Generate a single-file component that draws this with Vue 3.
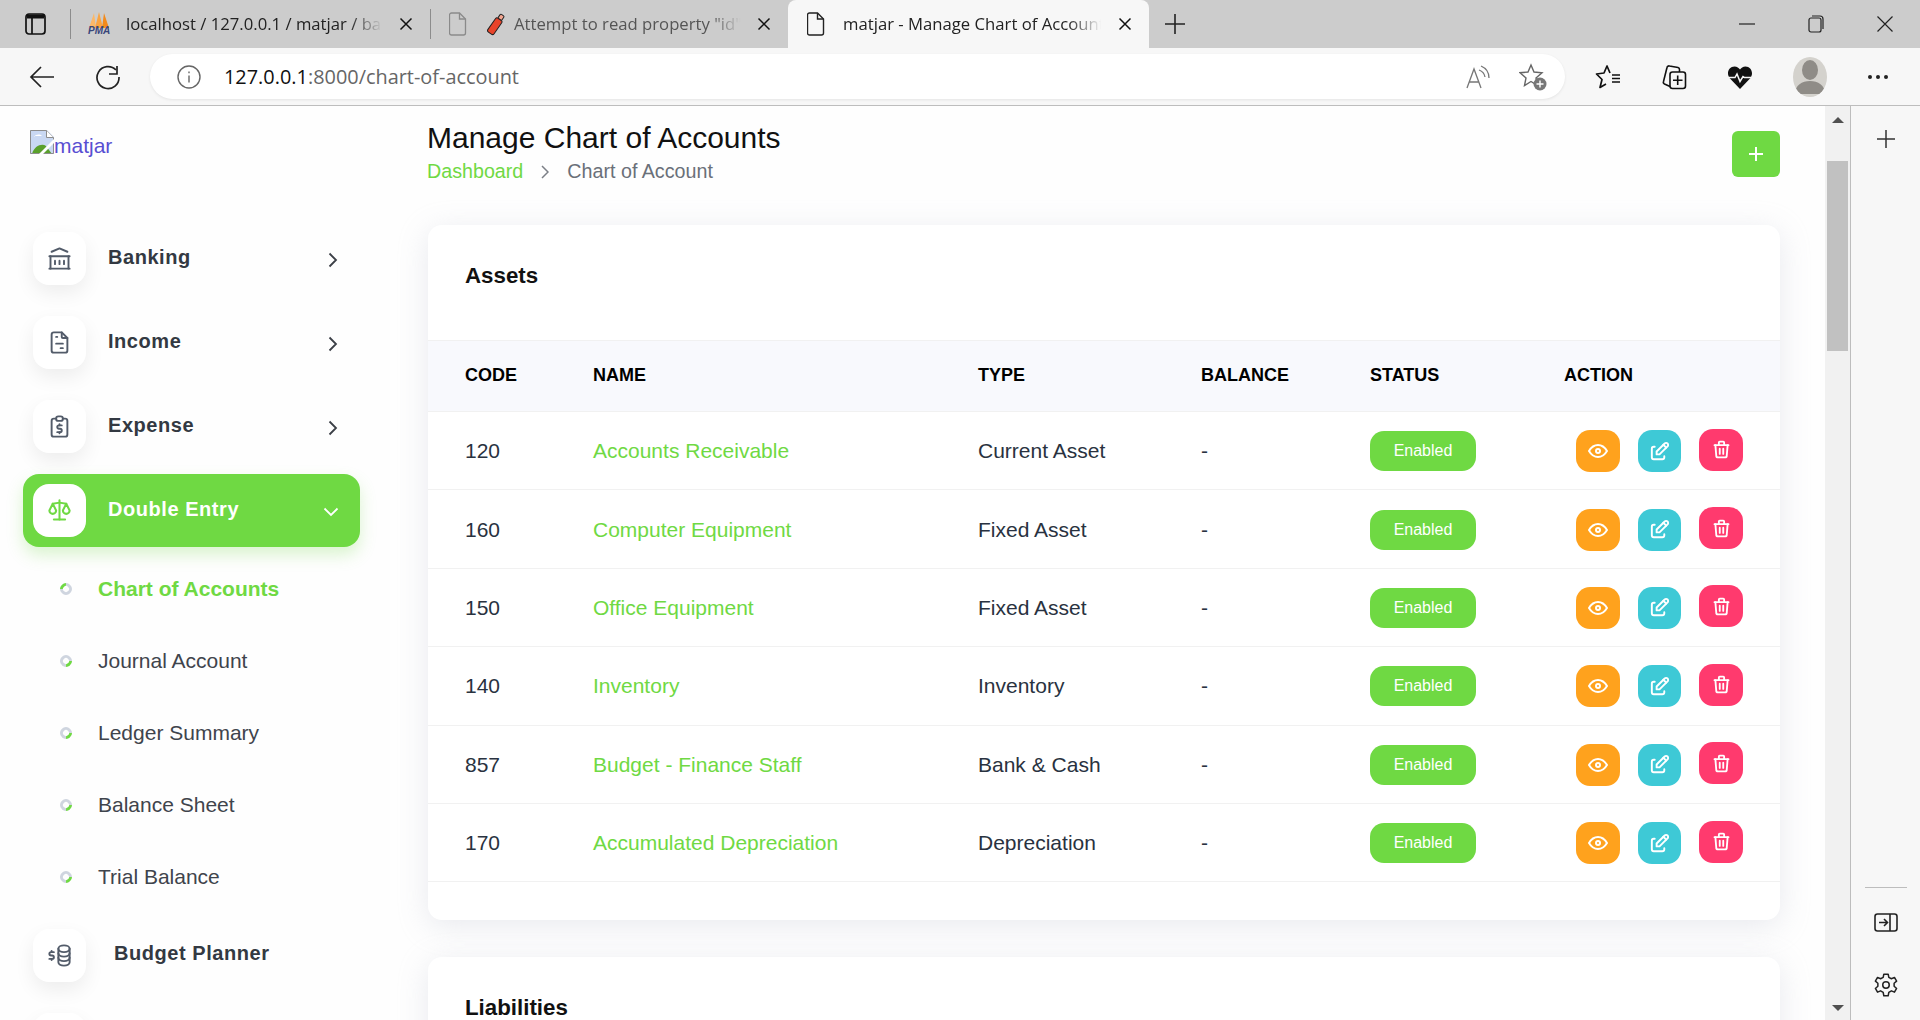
<template>
  <div class="window">
    <div class="tabstrip">
      <button class="tab-toggle">
        <svg width="21" height="22" viewBox="0 0 21 22" fill="none" stroke="#111" stroke-width="1.7"><rect x="1" y="1" width="19" height="20" rx="3"/><path d="M2 3.500h17" stroke-width="4"/><path d="M7 5v16"/></svg>
      </button>
      <span class="tab-sep"></span>
      <div class="tab tab-pma">
        <svg class="favicon" width="22" height="16" viewBox="0 0 22 16"><path d="M6 1L1 16h7z" fill="#fbb868"/><path d="M11 0L7 16h8z" fill="#f9a443"/><path d="M16 1l-2 15h7z" fill="#f28a1c"/></svg>
        <span class="pma-label">PMA</span>
        <span class="tab-title">localhost / 127.0.0.1 / matjar / ba</span>
        <svg class="tab-x" width="14" height="14" viewBox="0 0 14 14" stroke="#111" stroke-width="1.5"><path d="M1.500 1.500l11 11M12.500 1.500l-11 11"/></svg>
      </div>
      <span class="tab-sep"></span>
      <div class="tab tab-err">
        <svg class="file-ico gray" width="18" height="24" viewBox="0 0 18 24" fill="none" stroke="#8a8a8a" stroke-width="1.3"><path d="M2.500 1h8l6 6v14a2 2 0 0 1-2 2h-12a2 2 0 0 1-2-2v-18a2 2 0 0 1 2-2z"/><path d="M10.500 1v6h6"/></svg>
        <svg class="favicon red" width="20" height="24" viewBox="0 0 20 24"><g transform="rotate(35 10 12)"><rect x="6.500" y="6" width="7.500" height="17" rx="2" fill="#e8442a" stroke="#222" stroke-width="1"/><rect x="8" y="1" width="4.500" height="5" rx="1" fill="#f4a58f" stroke="#222" stroke-width="1"/></g></svg>
        <span class="tab-title muted">Attempt to read property "id"</span>
        <svg class="tab-x" width="14" height="14" viewBox="0 0 14 14" stroke="#111" stroke-width="1.5"><path d="M1.500 1.500l11 11M12.500 1.500l-11 11"/></svg>
      </div>
      <div class="tab tab-active">
        <svg class="file-ico" width="18" height="24" viewBox="0 0 18 24" fill="none" stroke="#222" stroke-width="1.4"><path d="M2.500 1h8l6 6v14a2 2 0 0 1-2 2h-12a2 2 0 0 1-2-2v-18a2 2 0 0 1 2-2z"/><path d="M10.500 1v6h6"/></svg>
        <span class="tab-title">matjar - Manage Chart of Accounts</span>
        <svg class="tab-x" width="14" height="14" viewBox="0 0 14 14" stroke="#111" stroke-width="1.5"><path d="M1.500 1.500l11 11M12.500 1.500l-11 11"/></svg>
      </div>
      <svg class="new-tab" width="22" height="22" viewBox="0 0 22 22" stroke="#222" stroke-width="1.6"><path d="M11 1v20M1 11h20"/></svg>
      <div class="win-controls">
        <svg width="16" height="16" viewBox="0 0 16 16" stroke="#222" stroke-width="1.2"><path d="M0 8h16"/></svg>
        <svg width="16" height="18" viewBox="0 0 16 18" fill="none" stroke="#222" stroke-width="1.2"><rect x="1" y="3" width="12" height="14" rx="2"/><path d="M4 1h8a3 3 0 0 1 3 3v10"/></svg>
        <svg width="16" height="16" viewBox="0 0 16 16" stroke="#222" stroke-width="1.2"><path d="M0.500 0.500l15 15M15.500 0.500l-15 15"/></svg>
      </div>
    </div>

    <div class="toolbar">
      <svg class="tool-back" width="26" height="24" viewBox="0 0 26 24" fill="none" stroke="#222" stroke-width="1.7"><path d="M25 12H2M12 2L2 12l10 10"/></svg>
      <svg class="tool-reload" width="26" height="26" viewBox="0 0 26 26" fill="none" stroke="#222" stroke-width="1.7"><path d="M21 6A11 11 0 1 0 24 13"/><path d="M14 10h8V2"/></svg>
      <div class="address">
        <svg width="24" height="24" viewBox="0 0 24 24" fill="none" stroke="#666" stroke-width="1.4"><circle cx="12" cy="12" r="11"/><path d="M12 10.500v7M12 6.500v1.800"/></svg>
        <span class="url"><b>127.0.0.1</b>:8000/chart-of-account</span>
        <svg class="read" width="26" height="26" viewBox="0 0 26 26" fill="none" stroke="#777" stroke-width="1.3"><path d="M1 24L8 5l7 19M3.500 18h9"/><path d="M13 6a9 9 0 0 1 6 7M15 2a13 13 0 0 1 8 12"/></svg>
        <svg class="fav-add" width="28" height="28" viewBox="0 0 28 28" fill="none" stroke="#666" stroke-width="1.4"><path d="M12 2l3 7 8 .7-6 5.300 1.500 7.500-6.500-4-6.500 4 1.500-7.500-6-5.300 8-.7z"/><circle cx="21" cy="21" r="6.500" fill="#777" stroke="none"/><path d="M21 17.500v7M17.500 21h7" stroke="#fff"/></svg>
      </div>
      <div class="tool-icons">
        <svg width="26" height="26" viewBox="0 0 26 26" fill="none" stroke="#111" stroke-width="1.700" stroke-linejoin="round"><path d="M15 9L12 2 9 9 1.500 10 7 15.500 5 23.500 11 20"/><path d="M17 11h8M17 14.500h8M17 18h8"/></svg>
        <svg width="26" height="26" viewBox="0 0 26 26" fill="none" stroke="#111" stroke-width="1.600"><path d="M9 22.500L3.500 20a2 2 0 0 1-1-2.500L6 3.500a2 2 0 0 1 2.500-1.500L17 3.500a2 2 0 0 1 1.500 2V8"/><rect x="9" y="8" width="15.500" height="16.500" rx="2.500"/><path d="M16.700 11.500v9.500M12 16.200h9.500"/></svg>
        <svg width="26" height="26" viewBox="0 0 26 26"><path d="M13 25L2.500 14C-1 9 2 2.500 7.500 2.500c2.500 0 4.500 1.500 5.500 3 1-1.500 3-3 5.500-3C24 2.500 27 9 23.500 14z" fill="#111"/><path d="M0 13.500h8l2-3.500 3 7.500 3-5 1.500 1h8.500" fill="none" stroke="#f6f6f6" stroke-width="1.500"/></svg>
        <span class="avatar"><svg width="34" height="40" viewBox="0 0 34 40"><ellipse cx="17" cy="13" rx="8" ry="10" fill="#8f8c87"/><path d="M2 37c0-9 7-13 15-13s15 4 15 13z" fill="#8f8c87"/></svg></span>
        <svg width="22" height="6" viewBox="0 0 22 6" fill="#222"><circle cx="3" cy="3" r="2"/><circle cx="11" cy="3" r="2"/><circle cx="19" cy="3" r="2"/></svg>
      </div>
    </div>

    <div class="viewport">
      <div class="page">
        <aside class="sidebar">
          <a class="logo">
            <svg width="24" height="24" viewBox="0 0 24 24"><path d="M0 0h17l7 7v17H0z" fill="#c9d8f3"/><path d="M2 24c2-8 10-11 14-8l6 8z" fill="#5aa02c"/><path d="M4 7c2-3 6-3 8-1H4z" fill="#fff"/><path d="M0.500 23.500V0.500h16l7 7v16z" fill="none" stroke="#8d8d8d"/><path d="M16.500 0.500v7h7" fill="#fff" stroke="#8d8d8d"/><path d="M24 9L9 24h4L24 13z" fill="#fff"/></svg>
            <span>matjar</span>
          </a>
          <nav class="menu">
            <div v-for="item in topItems" :key="item.label" class="menu-item">
              <span class="menu-icon"><svg width="27" height="27" viewBox="0 0 24 24" fill="none" stroke="#525b69" stroke-width="1.700" stroke-linecap="round" stroke-linejoin="round"><path v-for="d in item.paths" :key="d" :d="d"/></svg></span>
              <span class="menu-label">{{ item.label }}</span>
              <svg class="chev" width="10" height="16" viewBox="0 0 10 16" fill="none" stroke="#3b3f46" stroke-width="1.800"><path d="M1.500 1.500L8 8l-6.500 6.500"/></svg>
            </div>
            <div class="menu-item active">
              <span class="menu-icon"><svg width="27" height="27" viewBox="0 0 24 24" fill="none" stroke="#6fd943" stroke-width="1.800" stroke-linecap="round" stroke-linejoin="round"><path v-for="d in scalePaths" :key="d" :d="d"/></svg></span>
              <span class="menu-label">Double Entry</span>
              <svg class="chev down" width="16" height="10" viewBox="0 0 16 10" fill="none" stroke="#fff" stroke-width="1.800"><path d="M1.500 1.500L8 8l6.500-6.500"/></svg>
            </div>
            <ul class="submenu">
              <li v-for="(sub, i) in subItems" :key="sub" :class="{ current: i === 0 }"><i class="dot"></i>{{ sub }}</li>
            </ul>
            <div class="menu-item budget">
              <span class="menu-icon"><svg width="27" height="27" viewBox="0 0 24 24" fill="none" stroke="#525b69" stroke-width="1.700" stroke-linecap="round" stroke-linejoin="round"><path v-for="d in coinPaths" :key="d" :d="d"/></svg></span>
              <span class="menu-label">Budget Planner</span>
            </div>
            <div class="menu-item"><span class="menu-icon"></span></div>
          </nav>
        </aside>

        <main class="content">
          <header class="page-head">
            <div class="head-text">
              <h1>Manage Chart of Accounts</h1>
              <div class="crumbs">
                <a>Dashboard</a>
                <svg width="8" height="14" viewBox="0 0 8 14" fill="none" stroke="#7b7f86" stroke-width="1.500"><path d="M1 1l6 6-6 6"/></svg>
                <span>Chart of Account</span>
              </div>
            </div>
            <button class="add-btn">
              <svg width="16" height="16" viewBox="0 0 16 16" stroke="#fff" stroke-width="2"><path d="M8 1v14M1 8h14"/></svg>
            </button>
          </header>

          <section class="card">
            <h2>Assets</h2>
            <table>
              <colgroup>
                <col class="c-code" /><col class="c-name" /><col class="c-type" /><col class="c-bal" /><col class="c-status" /><col />
              </colgroup>
              <thead>
                <tr><th>Code</th><th>Name</th><th>Type</th><th>Balance</th><th>Status</th><th>Action</th></tr>
              </thead>
              <tbody>
                <tr v-for="row in assets" :key="row.code">
                  <td class="num">{{ row.code }}</td>
                  <td><a class="acc">{{ row.name }}</a></td>
                  <td>{{ row.type }}</td>
                  <td>-</td>
                  <td><span class="badge">Enabled</span></td>
                  <td>
                    <div class="actions">
                      <button class="act view"><svg width="24" height="24" viewBox="0 0 24 24" fill="none" stroke="#fff" stroke-width="2" stroke-linecap="round" stroke-linejoin="round"><path d="M10 12a2 2 0 1 0 4 0a2 2 0 0 0-4 0"/><path d="M21 12c-2.400 4-5.400 6-9 6c-3.600 0-6.600-2-9-6c2.400-4 5.400-6 9-6c3.600 0 6.600 2 9 6"/></svg></button>
                      <button class="act edit"><svg width="23" height="23" viewBox="0 0 24 24" fill="none" stroke="#fff" stroke-width="2" stroke-linecap="round" stroke-linejoin="round"><path d="M7 7h-1a2 2 0 0 0-2 2v9a2 2 0 0 0 2 2h9a2 2 0 0 0 2-2v-1"/><path d="M20.385 6.585a2.100 2.100 0 0 0-2.970-2.970l-8.415 8.385v3h3l8.385-8.415z"/><path d="M16 5l3 3"/></svg></button>
                      <button class="act del"><svg width="21" height="21" viewBox="0 0 24 24" fill="none" stroke="#fff" stroke-width="2.100" stroke-linecap="round" stroke-linejoin="round"><path d="M4 7h16M10 11v6M14 11v6"/><path d="M5 7l1 12a2 2 0 0 0 2 2h8a2 2 0 0 0 2-2l1-12"/><path d="M9 7v-3a1 1 0 0 1 1-1h4a1 1 0 0 1 1 1v3"/></svg></button>
                    </div>
                  </td>
                </tr>
              </tbody>
            </table>
          </section>

          <section class="card">
            <h2>Liabilities</h2>
          </section>
        </main>
      </div>

      <div class="scrollbar">
        <i class="arrow up"></i>
        <span class="thumb"></span>
        <i class="arrow dn"></i>
      </div>

      <div class="edge-panel">
        <svg width="22" height="22" viewBox="0 0 22 22" stroke="#333" stroke-width="1.500"><path d="M11 2v18M2 11h18"/></svg>
        <div class="edge-bottom">
          <span class="edge-line"></span>
          <svg width="24" height="20" viewBox="0 0 24 20" fill="none" stroke="#222" stroke-width="1.600"><rect x="1" y="1" width="22" height="17" rx="2.500"/><path d="M16 1v17M5 9.500h8M10 6l3.500 3.500L10 13"/></svg>
          <svg class="gear" width="26" height="26" viewBox="0 0 24 24" fill="none" stroke="#222" stroke-width="1.400" stroke-linejoin="round"><circle cx="12" cy="12" r="3"/><path d="M10 2h4l.6 3 2.400 1.200 2.800-1.200 2 3.400-2.300 2 0 2.800 2.300 2-2 3.400-2.800-1.200-2.400 1.400-.6 3.200h-4l-.6-3.200-2.400-1.400-2.800 1.200-2-3.400 2.300-2 0-2.800-2.300-2 2-3.400 2.800 1.200 2.400-1.200z"/></svg>
        </div>
      </div>
    </div>
  </div>
</template>

<script setup>
const scalePaths = ['M7 20h10', 'M6 6l6-1l6 1', 'M12 3v17', 'M9 12l-3-6l-3 6a3 3 0 0 0 6 0', 'M21 12l-3-6l-3 6a3 3 0 0 0 6 0']
const coinPaths = [
  'M11 6a5 3 0 1 0 10 0a5 3 0 1 0-10 0',
  'M11 6v4c0 1.657 2.239 3 5 3s5-1.343 5-3v-4',
  'M11 10v4c0 1.657 2.239 3 5 3s5-1.343 5-3v-4',
  'M11 14v4c0 1.657 2.239 3 5 3s5-1.343 5-3v-4',
  'M7 9h-2.500a1.500 1.500 0 0 0 0 3h1a1.500 1.500 0 0 1 0 3h-2.500',
  'M5 15v1m0-8v1'
]

const topItems = [
  { label: 'Banking', paths: ['M3 21h18', 'M3 10h18', 'M5 6l7-3l7 3', 'M4 10v11', 'M20 10v11', 'M8 14v3', 'M12 14v3', 'M16 14v3'] },
  { label: 'Income', paths: ['M14 3v4a1 1 0 0 0 1 1h4', 'M17 21h-10a2 2 0 0 1-2-2v-14a2 2 0 0 1 2-2h7l5 5v11a2 2 0 0 1-2 2z', 'M9 7h1', 'M9 13h6', 'M13 17h2'] },
  { label: 'Expense', paths: ['M9 5h-2a2 2 0 0 0-2 2v12a2 2 0 0 0 2 2h10a2 2 0 0 0 2-2v-12a2 2 0 0 0-2-2h-2', 'M9 5a2 2 0 0 1 2-2h2a2 2 0 0 1 2 2a2 2 0 0 1-2 2h-2a2 2 0 0 1-2-2z', 'M14 11h-2.500a1.500 1.500 0 0 0 0 3h1a1.500 1.500 0 0 1 0 3h-2.500', 'M12 17v1m0-8v1'] }
]

const subItems = ['Chart of Accounts', 'Journal Account', 'Ledger Summary', 'Balance Sheet', 'Trial Balance']

const assets = [
  { code: 120, name: 'Accounts Receivable', type: 'Current Asset' },
  { code: 160, name: 'Computer Equipment', type: 'Fixed Asset' },
  { code: 150, name: 'Office Equipment', type: 'Fixed Asset' },
  { code: 140, name: 'Inventory', type: 'Inventory' },
  { code: 857, name: 'Budget - Finance Staff', type: 'Bank & Cash' },
  { code: 170, name: 'Accumulated Depreciation', type: 'Depreciation' }
]
</script>

<style>
html, body { margin: 0; height: 100%; overflow: hidden; }
</style>

<style scoped>
.window {
  width: 1920px;
  height: 1020px;
  display: flex;
  flex-direction: column;
  overflow: hidden;
  font-family: "Liberation Sans", Arial, sans-serif;
  color: #293240;
}

/* browser chrome */
.tabstrip {
  height: 48px;
  flex-shrink: 0;
  background: #cccccc;
  display: flex;
  align-items: center;
  position: relative;
}
.tab-toggle {
  width: 70px;
  height: 48px;
  border: none;
  background: none;
  padding: 0;
  display: flex;
  align-items: center;
  justify-content: center;
}
.tab-sep {
  width: 1px;
  height: 30px;
  background: #8c8c8c;
  flex-shrink: 0;
}
.tab {
  height: 48px;
  display: flex;
  align-items: center;
  font-family: "Open Sans", sans-serif;
  font-size: 16.700px;
  color: #222;
  box-sizing: border-box;
  position: relative;
}
.tab-pma { width: 359px; padding-left: 17px; }
.tab-err { width: 357px; padding-left: 18px; }
.tab-active {
  width: 361px;
  padding-left: 19px;
  background: #f7f7f7;
  border-radius: 8px 8px 0 0;
}
.pma-label {
  position: absolute;
  left: 17px;
  top: 26px;
  font-size: 10px;
  line-height: 10px;
  font-weight: 700;
  font-style: italic;
  color: #39467a;
  font-family: "Liberation Sans", sans-serif;
}
.favicon { flex-shrink: 0; margin-top: -9px; }
.favicon.red { margin: 0 8px 0 19px; }
.file-ico { flex-shrink: 0; margin-right: 18px; }
.file-ico.gray { margin-right: 0; }
.tab-title {
  flex: 1;
  min-width: 0;
  margin: -2px 0 0 16px;
  white-space: nowrap;
  overflow: hidden;
  -webkit-mask-image: linear-gradient(to right, #000 86%, transparent 99%);
  mask-image: linear-gradient(to right, #000 86%, transparent 99%);
}
.tab-err .tab-title { margin-left: 0; }
.tab-active .tab-title { margin-left: 0; }
.tab-title.muted { color: #555; }
.tab-x { flex-shrink: 0; margin: 0 17px 0 14px; }
.new-tab { margin-left: 15px; }
.win-controls {
  position: absolute;
  right: 27px;
  top: 15px;
  display: flex;
  align-items: center;
  gap: 53px;
}

.toolbar {
  height: 57px;
  flex-shrink: 0;
  background: #f7f7f7;
  border-bottom: 1px solid #bdbdbd;
  box-sizing: content-box;
  display: flex;
  align-items: center;
  padding-left: 29px;
}
.tool-reload { margin-left: 40px; }
.address {
  margin-left: 29px;
  width: 1415px;
  height: 45px;
  border-radius: 23px;
  background: #fff;
  box-shadow: 0 1px 3px rgba(0, 0, 0, 0.08);
  display: flex;
  align-items: center;
  padding: 0 18px 0 27px;
  box-sizing: border-box;
}
.url {
  margin-left: 23px;
  flex: 1;
  font-family: "Open Sans", sans-serif;
  font-size: 19.900px;
  color: #666;
}
.url b { font-weight: 400; color: #111; }
.fav-add { margin-left: 27px; }
.tool-icons {
  margin-left: 30px;
  display: flex;
  align-items: center;
  gap: 40px;
}
.avatar {
  width: 34px;
  height: 40px;
  border-radius: 50%;
  background: #d4d2cd;
  overflow: hidden;
  margin: 0 0 0 -0.500px;
}
.avatar svg { display: block; }

.viewport {
  flex: 1;
  min-height: 0;
  display: flex;
}

/* page */
.page {
  flex: 1;
  min-width: 0;
  display: flex;
  overflow: hidden;
  background: #fefefe;
}
.sidebar {
  width: 385px;
  flex-shrink: 0;
  box-sizing: border-box;
  padding: 24px 0 0 23px;
}
.logo {
  display: flex;
  align-items: flex-start;
  height: 86.500px;
  margin-left: 7px;
  font-size: 21px;
  color: #584ed2;
}
.logo span { line-height: 31px; }
.menu {
  width: 337px;
}
.menu-item {
  height: 84px;
  display: flex;
  align-items: center;
  padding-left: 10px;
  position: relative;
  box-sizing: border-box;
}
.menu-icon {
  width: 53px;
  height: 53px;
  flex-shrink: 0;
  background: #fff;
  border-radius: 16px;
  box-shadow: 0 8px 20px rgba(0, 0, 0, 0.07);
  display: flex;
  align-items: center;
  justify-content: center;
}
.menu-label {
  margin-left: 22px;
  font-size: 20px;
  font-weight: 700;
  letter-spacing: 0.55px;
  color: #333942;
  margin-top: -3px;
}
.chev { position: absolute; left: 305px; top: 35px; }
.active {
  height: 73px;
  margin-top: 5.500px;
  background: #6fd943;
  border-radius: 16px;
  box-shadow: 0 8px 16px rgba(111, 217, 67, 0.25);
}
.active .menu-label { color: #fff; }
.active .menu-icon { box-shadow: none; }
.chev.down { left: 300px; top: 33px; }
.submenu {
  list-style: none;
  margin: 0;
  padding: 6px 0 0;
}
.submenu li {
  height: 72px;
  display: flex;
  align-items: center;
  font-size: 21px;
  color: #3f444c;
}
.dot {
  width: 6px;
  height: 6px;
  border: 3px solid #cfd5df;
  border-bottom-color: #6fd943;
  border-radius: 50%;
  margin: 0 26px 0 37px;
  transform: rotate(-45deg);
}
.submenu .current { color: #6fd943; font-weight: 700; }
.current .dot { transform: rotate(135deg); }
.budget .menu-label { margin-left: 28px; }

.content {
  flex: 1;
  min-width: 0;
  box-sizing: border-box;
  padding: 0 45px 0 43px;
}
.page-head {
  height: 119px;
  display: flex;
  justify-content: space-between;
  align-items: flex-start;
}
.head-text { margin-left: -1px; }
h1 {
  margin: 14px 0 0;
  font-size: 30px;
  line-height: 36px;
  font-weight: 400;
  color: #111;
}
.crumbs {
  display: flex;
  align-items: center;
  gap: 18px;
  margin-top: 4px;
  font-size: 19.700px;
  color: #6a7079;
}
.crumbs a { color: #6fd943; }
.add-btn {
  width: 48px;
  height: 46px;
  margin-top: 25px;
  border: none;
  border-radius: 6px;
  background: #6fd943;
  display: flex;
  align-items: center;
  justify-content: center;
}
.card {
  background: #fff;
  border-radius: 14px;
  margin-bottom: 37px;
  padding-bottom: 38px;
  box-shadow: 0 6px 30px rgba(182, 186, 203, 0.3);
}
h2 {
  margin: 0;
  height: 115px;
  box-sizing: border-box;
  padding: 38px 37px 0;
  font-size: 22.300px;
  line-height: 26px;
  font-weight: 700;
  color: #111;
}
table {
  width: 100%;
  border-collapse: collapse;
  table-layout: fixed;
  font-size: 21px;
}
.c-code { width: 128px; }
.c-name { width: 385px; }
.c-type { width: 223px; }
.c-bal { width: 169px; }
.c-status { width: 194px; }
thead tr {
  background: #f8f9fd;
  border-top: 1px solid #f1f1f1;
  border-bottom: 1px solid #f1f1f1;
}
th {
  height: 69px;
  padding: 0 0 1px 37px;
  text-align: left;
  text-transform: uppercase;
  font-size: 18px;
  font-weight: 700;
  color: #000;
}
td {
  height: 78.400px;
  padding: 1px 0 0 37px;
  box-sizing: border-box;
  border-bottom: 1.500px solid #f1f1f1;
  color: #293240;
}
.acc { color: #6fd943; }
.badge {
  display: inline-block;
  width: 106px;
  height: 40px;
  line-height: 39px;
  text-align: center;
  border-radius: 14px;
  background: #6fd943;
  color: #fff;
  font-size: 16px;
}
.actions {
  display: flex;
  align-items: center;
  gap: 18px;
  margin-left: 12px;
}
.act {
  width: 44px;
  height: 42px;
  border: none;
  padding: 0;
  border-radius: 14px;
  display: flex;
  align-items: center;
  justify-content: center;
}
.view { background: #ffa21d; }
.edit { background: #3ec9d6; width: 43px; }
.del { background: #ff3a6e; margin-bottom: 3px; }

/* scrollbar + edge panel */
.scrollbar {
  width: 25px;
  flex-shrink: 0;
  background: #f1f1f1;
  position: relative;
}
.thumb {
  position: absolute;
  top: 55px;
  left: 2px;
  width: 21px;
  height: 190px;
  background: #c1c1c1;
}
.arrow {
  position: absolute;
  left: 7px;
  width: 0;
  height: 0;
  border-left: 6px solid transparent;
  border-right: 6px solid transparent;
}
.up { top: 11px; border-bottom: 6px solid #505050; }
.dn { bottom: 9px; border-top: 6px solid #505050; }
.edge-panel {
  width: 70px;
  flex-shrink: 0;
  background: #f7f7f7;
  border-left: 1px solid #bdbdbd;
  box-sizing: border-box;
  display: flex;
  flex-direction: column;
  align-items: center;
  justify-content: space-between;
  padding-top: 22px;
}
.edge-bottom {
  display: flex;
  flex-direction: column;
  align-items: center;
}
.edge-line {
  width: 42px;
  height: 1px;
  background: #bdbdbd;
  margin-bottom: 25px;
}
.gear { margin: 39px 0 22px; }
</style>
